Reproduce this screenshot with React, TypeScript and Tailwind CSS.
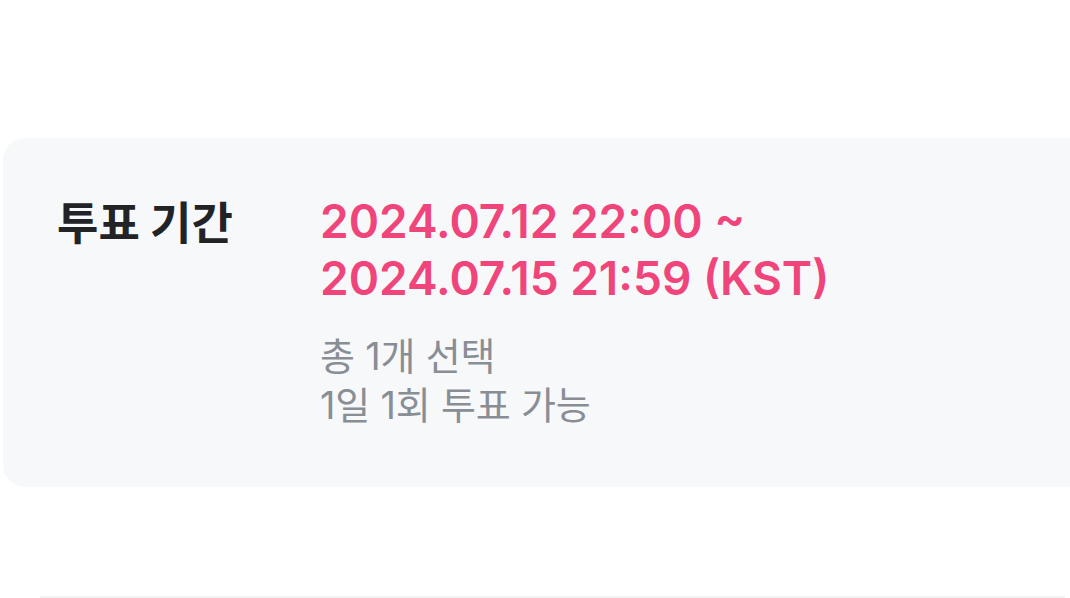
import React from "react";

const sans = "font-['Inter','Noto_Sans_CJK_KR',sans-serif]";

export default function App() {
  return (
    <div className={`min-h-screen bg-white pt-[138px] pl-[3px] ${sans}`}>
      <section className="flex h-[349px] rounded-l-[22px] bg-[#f7f8fa] pl-[54px] pt-[55px]">
        <div className="w-[263px] shrink-0 -mt-[1px] text-[45px] leading-[57px] font-bold text-[#222326] font-['Noto_Sans_CJK_KR',sans-serif]">
          투표 기간
        </div>
        <div className="flex flex-col">
          <div className="text-[46px] leading-[57px] font-semibold text-[#f0457a]">
            <p>2024.07.12 22:00 ~</p>
            <p>2024.07.15 21:59 (KST)</p>
          </div>
          <div className="mt-[25px] text-[38px] leading-[49px] tracking-[-0.2px] text-[#898e95]">
            <p>총 1개 선택</p>
            <p>1일 1회 투표 가능</p>
          </div>
        </div>
      </section>
      <div className="mt-[109px] ml-[37px] mr-[5px] h-[2px] bg-[#f2f3f5]" />
    </div>
  );
}
